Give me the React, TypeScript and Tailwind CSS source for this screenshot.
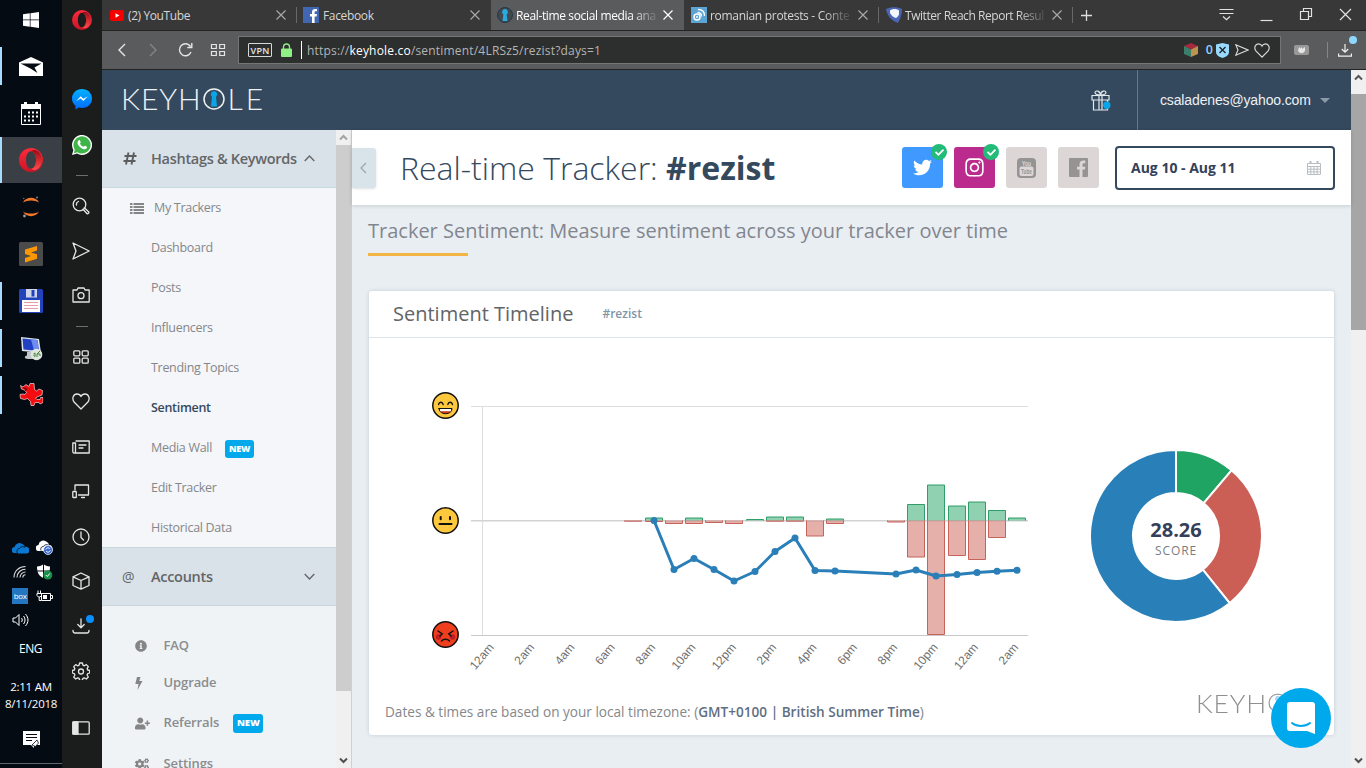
import type { ReactNode } from "react";
import {
  FaTwitter,
  FaInstagram,
  FaInfoCircle,
  FaUserPlus,
  FaCogs,
  FaCheck,
} from "react-icons/fa";

/* ---------- Desktop taskbar ---------- */

function TaskItem({ children, open, active }: { children: ReactNode; open?: boolean; active?: boolean }) {
  return (
    <div className={active ? "flex h-[47px] pb-px" : "flex h-[47px] pt-[4px] pb-[5px]"}>
      <div className={open ? "w-[2px] bg-[#a6dcff]" : "w-[2px]"} />
      <div className={active ? "flex flex-1 items-center justify-center bg-[#3a3e45] pr-[2px]" : "flex flex-1 items-center justify-center pr-[2px]"}>
        {children}
      </div>
    </div>
  );
}

function OperaLogo({ size }: { size: number }) {
  return (
    <svg width={size} height={size} viewBox="0 0 24 24">
      <defs>
        <linearGradient id="op" x1="0" y1="0" x2="0" y2="1">
          <stop offset="0" stopColor="#ff2a3c" />
          <stop offset="1" stopColor="#c91526" />
        </linearGradient>
        <linearGradient id="op2" x1="0" y1="0" x2="0" y2="1">
          <stop offset="0" stopColor="#9d0b16" />
          <stop offset="1" stopColor="#ff4b4b" />
        </linearGradient>
      </defs>
      <path fillRule="evenodd" fill="url(#op)" d="M12 0a12 12 0 1 0 0 24 12 12 0 0 0 0-24Zm0 3.2c3 0 5 4 5 8.800s-2 8.800-5 8.800-5-4-5-8.800 2-8.800 5-8.800Z" />
      <path fill="url(#op2)" d="M12 3.200c2-1.600 5-1.500 7.600.6A12 12 0 0 1 19.600 20.200c-2.600 2.200-5.600 2.200-7.600.6 3 0 5-4 5-8.800s-2-8.800-5-8.800Z" />
    </svg>
  );
}

function Taskbar() {
  return (
    <aside className="flex h-full w-[62px] flex-col bg-[#050b13] text-white">
      <div className="flex h-[43px] items-center justify-center pb-[4px]">
        <svg width="16" height="16" viewBox="0 0 16 16" fill="#fff">
          <path d="M0 2.300 6.800 1.300V7.500H0ZM7.500 1.200 16 0V7.500H7.500ZM0 8.300H6.800V14.700L0 13.700ZM7.500 8.300H16V16L7.500 14.800Z" />
        </svg>
      </div>
      <TaskItem open>
        <svg width="24" height="19" viewBox="0 0 24 19">
          <path d="M0 5.500 12 0l12 5.500V19H0Z" fill="#fff" />
          <path d="M1.500 6.500H22.500L15.500 10.500l3 5.500L11.500 11.500Z" fill="#050b13" />
        </svg>
      </TaskItem>
      <TaskItem>
        <svg width="20" height="23" viewBox="0 0 20 23">
          <path d="M.5 2.500h19v20H.5Z" fill="none" stroke="#fff" />
          <path d="M0 2h3V0h3v2h8V0h3v2h3v5H0Z" fill="#fff" />
          <g fill="#fff">
            {[9.5, 13.5, 17.5].map((y) =>
              [3, 7, 11, 15].map((x) => (y === 9.5 && x === 3) || (y === 17.5 && x === 15) ? null : <rect key={x + "-" + y} x={x} y={y} width="2" height="2" />),
            )}
          </g>
        </svg>
      </TaskItem>
      <TaskItem open active>
        <OperaLogo size={24} />
      </TaskItem>
      <TaskItem>
        <svg width="18" height="22" viewBox="0 0 18 22">
          <path d="M1 6.500C4 .3 14 .3 17 6.500 13 3.800 5 3.800 1 6.500ZM1 15.500c3 6.200 13 6.200 16 0-4 2.700-12 2.700-16 0Z" fill="#f37726" />
          <circle cx="15" cy="1.500" r="1.100" fill="#777" />
          <circle cx="2.500" cy="20" r="1.400" fill="#999" />
          <circle cx="1.800" cy="2.500" r=".7" fill="#777" />
        </svg>
      </TaskItem>
      <TaskItem>
        <svg width="24" height="24" viewBox="0 0 24 24">
          <rect width="24" height="24" rx="1.500" fill="#4b4b4b" />
          <path d="M6 7.600 18 4v4.500L12 10.400 18 12.300v4.500L6 20.500V16l6-1.900-6-2Z" fill="#ff9800" />
        </svg>
      </TaskItem>
      <TaskItem open>
        <svg width="24" height="24" viewBox="0 0 24 24">
          <rect width="24" height="24" rx="1.500" fill="#2343bd" />
          <rect x="7" y="0" width="11" height="8.500" fill="#cdd6ea" />
          <rect x="12.500" y="1" width="3" height="6.500" fill="#2343bd" />
          <rect x="3" y="11" width="18" height="12" fill="#fff" />
          <path d="M5 13.500h14M5 16.500h14M5 19.500h14" stroke="#e99aa4" strokeWidth="1.200" />
        </svg>
      </TaskItem>
      <TaskItem open>
        <svg width="24" height="25" viewBox="0 0 24 25">
          <path d="m2 1 18 2 2 14-19-2Z" fill="#dce3ee" />
          <path d="m3.500 2.500 15 1.500 1.500 11-15.500-1.500Z" fill="#2140c4" />
          <path d="m12 3.500 6.500.5 1.500 11-5-.6Z" fill="#6f8cf0" />
          <path d="M8 16h6v3l4 4H9c-4 0-4-3-1-3.500Z" fill="#c3c6cb" />
          <circle cx="17.500" cy="18.500" r="5.800" fill="#dfe6dc" />
          <path d="m14.500 19.500 1.500 1v-3.500l-1.500 1M18 21v-3l3-3M18.500 18h2.500v2" stroke="#41803c" fill="none" />
        </svg>
      </TaskItem>
      <TaskItem open>
        <svg width="24" height="25" viewBox="0 0 24 25">
          <path d="M1.500 2.500 4 4l3-2.500 3 2 1-3h4l.5 6 2 1.500 2.500-2 3.500 1.500-.5 4.500-4 1.500-2.500 1.500 1.500 1.500h3l.5-2h2.500v5l-3 1.500-1-1.500h-4l-1 3-3 0-.5-4-3-3-3 1-4-1-.5-4 3-.5 2 .5 1.500-2-2-2.500-3-1Z" fill="#f40d10" stroke="#f9d5d5" strokeWidth=".7" />
          <path d="m4 4.500 3 1.500M8 5.500 6 8" stroke="#300" strokeWidth="1" />
        </svg>
      </TaskItem>
      <div className="flex-1" />
      <div className="grid h-[96px] grid-cols-2 items-center pl-[8px] pr-[5px] pb-px [&>*]:mx-auto">
        <svg width="17" height="12" viewBox="0 0 17 12" fill="#0a78d0">
          <path d="M5 11H3a3 3 0 0 1-.5-6A5 5 0 0 1 11 2.500a4 4 0 0 1 2 2.500 3.300 3.300 0 0 1 2 6.500H6A3.500 3.500 0 0 1 5 11Z" />
          <path d="M5.500 11c-1.500-3 .5-4.500 2-4.500C8.500 4.500 11 4 13 5.500" fill="none" stroke="#050b13" strokeWidth=".8" />
        </svg>
        <svg width="17" height="15" viewBox="0 0 17 15">
          <path d="M5 11H3a3 3 0 0 1-.5-6A5 5 0 0 1 11 2a4 4 0 0 1 2 3 3.300 3.300 0 0 1 2 6H6Z" fill="#fff" />
          <path d="M5 10.500C4 8 5.500 6.500 7.500 6.500 8.500 4.500 11 4 13 5.500" fill="none" stroke="#050b13" strokeWidth=".8" />
          <circle cx="12" cy="10" r="4.500" fill="#3c6bd0" stroke="#fff" strokeWidth=".7" />
          <path d="M9.800 9.500a2.300 2.300 0 0 1 4-.8M14.200 10.500a2.300 2.300 0 0 1-4 .8" stroke="#fff" fill="none" />
        </svg>
        <svg width="14" height="13" viewBox="0 0 14 13" fill="none" stroke="#ddd" strokeWidth="1.100">
          <path d="M1 12.500C1 6 6 1.500 12.500 1.500M4 12.500c0-5 4-8.300 8.500-8.300M7 12.500c0-3 2.500-5.500 5.500-5.500M9.800 12.500c0-1.500 1-2.800 2.700-2.800" />
        </svg>
        <svg width="17" height="16" viewBox="0 0 17 16">
          <path d="M1 2.500C4 2.500 6 1.500 7.500 0 9 1.500 11 2.500 14 2.500 14 9 12 12 7.500 14 3 12 1 9 1 2.500Z" fill="#fff" />
          <path d="M7.500 0v14M1 7h13" stroke="#050b13" />
          <circle cx="11.800" cy="11" r="4.500" fill="#179149" />
          <path d="m9.800 11 1.500 1.500 2.500-3" stroke="#fff" fill="none" />
        </svg>
        <div className="flex h-[16px] w-[16px] items-center justify-center bg-[#2277c0] font-['Open_Sans',sans-serif] text-[8px] leading-none tracking-[-0.3px] text-white">box</div>
        <svg width="17" height="13" viewBox="0 0 17 13" fill="none" stroke="#fff">
          <path d="M5.500 3.500h9v7h-9ZM15 5.500h1.500v3H15M2 .5v3M4.500.5v3M1 3.500h4.500v2L4 7H2.500L1 5.500ZM3.200 7v3.500H5" />
          <rect x="7" y="5" width="4" height="4" fill="#fff" stroke="none" />
        </svg>
        <svg width="17" height="14" viewBox="0 0 17 14" fill="none" stroke="#fff">
          <path d="M1 5h2.500L7 1.500v11L3.500 9H1ZM9.500 5c1 1.300 1 2.700 0 4M11.500 3c2 2.500 2 5.500 0 8M13.500 1c3.300 4 3.300 8 0 12" />
        </svg>
      </div>
      <div className="mt-[5px] pr-px text-center font-['Open_Sans',sans-serif] text-[12px] leading-[24px] tracking-[-0.4px]">ENG</div>
      <div className="mt-[17px] text-center font-['Open_Sans',sans-serif] text-[11.5px] leading-[17px] tracking-[-0.25px]">
        <div>2:11 AM</div>
        <div>8/11/2018</div>
      </div>
      <div className="flex h-[51px] items-center justify-center pt-[3px]">
        <svg width="17" height="17" viewBox="0 0 17 17">
          <path d="M0 0h17v14h-6v3l-3-3H0Z" fill="#fff" />
          <path d="M3 3.500h11M3 6.500h11M3 9.500h6" stroke="#050b13" />
          <path d="m9 14 5-5 1.500 3-3 3.500Z" fill="#fff" stroke="#050b13" strokeWidth=".8" />
        </svg>
      </div>
      <div className="mb-[4px] h-px bg-[#60656b]" />
    </aside>
  );
}

/* ---------- Browser side panel ---------- */

function Slot({ className, children }: { className: string; children?: ReactNode }) {
  return <div className={"flex shrink-0 items-center justify-center " + className}>{children}</div>;
}

function Line({ w = 20, h = 20, children }: { w?: number; h?: number; children: ReactNode }) {
  return (
    <svg width={w} height={h} viewBox={`0 0 ${w} ${h}`} fill="none" stroke="#e4e6e6" strokeWidth="1.300" strokeLinejoin="round" strokeLinecap="round" className="mr-[2px]">
      {children}
    </svg>
  );
}

const heart = "M9 16 2.300 9.300C-.7 5.500 1.500 1 5 1c2 0 3.300 1 4 2.500C9.700 2 11 1 13 1c3.500 0 5.700 4.500 2.700 8.300Z";

function SidePanel() {
  return (
    <aside className="flex h-full w-[40px] flex-col bg-[#1b1d1d]">
      <Slot className="h-[40px]">
        <OperaLogo size={20} />
      </Slot>
      <Slot className="mt-[37px] h-[45px]">
        <svg width="20" height="21" viewBox="0 0 20 21">
          <defs>
            <linearGradient id="ms" x1="0" y1="0" x2="0" y2="1">
              <stop offset="0" stopColor="#00b2ff" />
              <stop offset="1" stopColor="#006aff" />
            </linearGradient>
          </defs>
          <path d="M10 0C4.300 0 0 4.200 0 9.500c0 3 1.300 5.500 3.500 7.200V20.500l3.300-2c1 .3 2 .5 3.200.5 5.700 0 10-4.200 10-9.500S15.700 0 10 0Z" fill="url(#ms)" />
          <path d="m4.200 12 4.500-4.700 2.600 2.400 4.500-2.400-4.500 4.700-2.500-2.400Z" fill="#fff" />
        </svg>
      </Slot>
      <Slot className="h-[46px]">
        <svg width="20" height="20" viewBox="0 0 20 20">
          <path d="M0 20 1.400 15A10 10 0 1 1 5 18.600Z" fill="#fff" />
          <path d="M1.800 18.200 2.800 14.600A8.600 8.600 0 1 1 5.400 17.200Z" fill="#3fb449" />
          <path d="M6.500 5.500c.5-.6 1.300-.5 1.500 0l.7 1.700c.1.500-.7 1.200-.7 1.500.8 1.500 2 2.500 3.500 3.100.4 0 1-1.100 1.500-1l1.900.9c.3.200 0 1.300-.4 1.700-1.400 1.300-3.300.8-5-.2-1.800-1.100-3.200-2.700-3.900-4.500-.3-1.200.2-2.500.9-3.200Z" fill="#fff" />
        </svg>
      </Slot>
      <Slot className="h-[15px]"><div className="h-px w-[12px] bg-[#6b6e6e]" /></Slot>
      <Slot className="h-[45px]">
        <Line w={18} h={18}>
          <circle cx="7.500" cy="7.500" r="6.300" />
          <path d="M4.500 8a3 3 0 0 1 2-3.500M12.300 10.800l4.500 4.200c.6.600-1 2.300-1.700 1.700L11 12.200" />
        </Line>
      </Slot>
      <Slot className="h-[45px]">
        <Line w={18} h={18}><path d="M1 1l16.200 8L1 17l3-8Z" /></Line>
      </Slot>
      <Slot className="h-[44px]">
        <Line w={18} h={16}>
          <path d="M1 3h4l1-2h6l1 2h4.200v12H1Z" />
          <circle cx="9" cy="8.700" r="3" />
        </Line>
      </Slot>
      <Slot className="mt-px h-[16px]"><div className="h-px w-[12px] bg-[#6b6e6e]" /></Slot>
      <Slot className="h-[45px]">
        <Line w={16} h={14}>
          <rect x=".8" y=".8" width="6" height="5" rx="1" />
          <rect x="9.200" y=".8" width="6" height="5" rx="1" />
          <rect x=".8" y="8.200" width="6" height="5" rx="1" />
          <rect x="9.200" y="8.200" width="6" height="5" rx="1" />
        </Line>
      </Slot>
      <Slot className="h-[45px]">
        <Line w={18} h={17}><path d={heart} /></Line>
      </Slot>
      <Slot className="h-[45px]">
        <Line w={18} h={14}>
          <path d="M4 1h13.200v12H2.200C1.300 13 .8 12.500.8 11.800V3H3.500v9M7 5h7M7 8h4" />
        </Line>
      </Slot>
      <Slot className="h-[45px]">
        <Line w={18} h={15}>
          <path d="M3 6V1h13.500v10H6.500M9.500 13.500h3" />
          <rect x=".8" y="7.500" width="3.500" height="6" rx=".6" />
        </Line>
      </Slot>
      <Slot className="h-[45px]">
        <Line w={18} h={18}>
          <circle cx="9" cy="9" r="8" />
          <path d="M9 4v5.500l2.500 2.500" />
        </Line>
      </Slot>
      <Slot className="h-[44px]">
        <Line w={18} h={18}><path d="M9 1l8 3.800v8.700L9 17.200 1 13.500V4.800ZM1 4.800l8 3.700 8-3.700M9 8.500v8.700" /></Line>
      </Slot>
      <Slot className="relative h-[45px]">
        <Line w={18} h={16}><path d="M9 1v8.500M5.800 6.500 9 9.700l3.200-3.200M1 12.500c0 2 .5 2.500 2 2.500h12c1.500 0 2-.5 2-2.500" /></Line>
        <div className="absolute top-[12px] left-[24px] h-2 w-2 rounded-full bg-[#0b8fff]" />
      </Slot>
      <Slot className="h-[46px]">
        <Line w={18} h={18}>
          <path d="M7.600 1h2.800l.5 2.200 1.400.6 2-1.200 2 2-1.200 2 .6 1.400 2 .5v2.500l-2 .6-.6 1.400 1.200 2-2 2-2-1.200-1.400.6-.5 2H7.600l-.5-2-1.400-.6-2 1.200-2-2 1.200-2-.6-1.400-2-.6V8.500l2-.5.6-1.400-1.200-2 2-2 2 1.200 1.400-.6Z" />
          <circle cx="9" cy="9.500" r="2.500" />
        </Line>
      </Slot>
      <Slot className="mt-[11px] h-[45px]">
        <Line w={18} h={14}>
          <rect x=".8" y=".8" width="16.400" height="12.400" rx="1" />
          <path d="M1 1h5v12H1Z" fill="#e4e6e6" />
        </Line>
      </Slot>
    </aside>
  );
}

/* ---------- Browser chrome ---------- */

function Close({ bright }: { bright?: boolean }) {
  return (
    <svg width="10" height="10" viewBox="0 0 10 10" stroke={bright ? "#fff" : "#a8a8a8"} strokeWidth="1.200" className="shrink-0">
      <path d="M.5.5l9 9M9.500.5l-9 9" />
    </svg>
  );
}

function Tab({ icon, title, width, active, bar, fade, tracking }: { icon: ReactNode; title: string; width: string; active?: boolean; bar?: boolean; fade?: boolean; tracking: string }) {
  return (
    <div className={`flex h-full shrink-0 items-center ${width} ${active ? "bg-[#5a5b5c] pl-[5px] text-white" : "pl-[6px] text-[#d6d6d6]"}`}>
      <div className="flex w-[17px] shrink-0 items-center justify-center">{icon}</div>
      <div className="ml-[3px] flex-1 whitespace-nowrap pt-px text-[12px]">
        <span className={`${tracking} ${fade ? "[mask-image:linear-gradient(to_right,#000_calc(100%-26px),rgba(0,0,0,0.15))]" : ""}`}>{title}</span>
      </div>
      <div className="mr-[10px] flex items-center"><Close bright={active} /></div>
      <div className={bar ? "h-[16px] w-px bg-[#686868]" : "h-[16px] w-px"} />
    </div>
  );
}

function Chrome() {
  return (
    <header className="shrink-0 font-['Open_Sans',sans-serif]">
      <div className="flex h-[31px] items-center border-b border-[#232323] bg-[#383838]">
        <Tab width="w-[195px]" bar tracking="tracking-[-0.4px]" title="(2) YouTube" icon={
          <svg width="14" height="11" viewBox="0 0 14 11" className="ml-px"><rect width="14" height="11" rx="2" fill="#f50000" /><path d="m5.500 3.200 4 2.300-4 2.300Z" fill="#fff" /></svg>
        } />
        <Tab width="w-[194px]" tracking="tracking-[-0.35px]" title="Facebook" icon={
          <svg width="16" height="16" viewBox="0 0 16 16" className="mr-px"><rect width="16" height="16" fill="#4267b2" /><path d="M9 16V9.500H7V7h2V5.200C9 3 10.200 2 12.200 2H14v2.300h-1.200c-.9 0-1.200.4-1.200 1.200V7H14l-.4 2.500h-2V16Z" fill="#fff" /></svg>
        } />
        <Tab width="w-[193px]" active fade tracking="tracking-[-0.36px]" title="Real-time social media ana" icon={
          <svg width="16" height="16" viewBox="0 0 16 16"><circle cx="8" cy="8" r="7.500" fill="#41484e" stroke="#26384a" /><path d="M8 2a3 3 0 0 0-1.600 5.500L5.500 14h5L9.600 7.500A3 3 0 0 0 8 2Z" fill="#29abe2" /></svg>
        } />
        <Tab width="w-[195px]" bar fade tracking="tracking-[-0.3px]" title="romanian protests - Conte" icon={
          <svg width="16" height="16" viewBox="0 0 16 16" fill="none" stroke="#fff"><rect width="16" height="16" fill="#5ba4d3" stroke="none" /><circle cx="6" cy="10" r="3" strokeWidth="1.500" /><circle cx="6" cy="10" r=".7" /><path d="M6.500 5.500c2.500 0 4 1.500 4 4M7 2.500c4 0 6.500 2.500 6.500 6.500" strokeWidth="1.300" /></svg>
        } />
        <Tab width="w-[194px]" bar fade tracking="tracking-[-0.45px]" title="Twitter Reach Report Resul" icon={
          <svg width="16" height="16" viewBox="0 0 16 16"><path d="M0 2C5-.5 11-.5 16 2c0 7-3 12-4 14C6 14 1 9 0 2Z" fill="#4a66b5" /><path d="M4 3.500c2-2 7-2 9 0v4c-1 2-2 3-3 3.500-3-.5-5-3-6-5Z" fill="#f4f6fb" /></svg>
        } />
        <div className="flex flex-1 items-center">
          <svg width="11" height="11" viewBox="0 0 11 11" stroke="#ddd" strokeWidth="1.300" className="ml-[8px]"><path d="M5.500 0v11M0 5.500h11" /></svg>
          <div className="flex-1" />
          <svg width="146" height="16" viewBox="0 0 146 16" fill="none" stroke="#e2e2e2" strokeWidth="1.200" className="mr-[11px]">
            <path d="M10.500 2.500h14M10.500 6.500h14M14 9.500l3.500 3.300L21 9.500" />
            <path d="M51.500 13.500h12" />
            <path d="M94.500 1.500h8v8h-8Z" />
            <path d="M91.500 4.500h8v8h-8Z" fill="#383838" />
            <path d="m131 2 11 11M142 2 131 13" />
          </svg>
        </div>
      </div>
      <div className="flex h-[39px] items-center border-b border-[#232323] bg-[#5a5b5c]">
        <svg width="130" height="20" viewBox="0 0 130 20" fill="none" stroke="#e6e6e6" strokeWidth="1.400" className="shrink-0">
          <path d="m23 4-6 6 6 6" />
          <path d="m48 4 6 6-6 6" stroke="#858686" />
          <path d="M88.500 6.500A6 6 0 1 0 89 12M89.800 3v4.500h-4.500" />
          <path d="M109.500 4.500h4.800v4h-4.800ZM117.700 4.500h4.800v4h-4.800ZM109.500 11.500h4.800v4h-4.800ZM117.700 11.500h4.800v4h-4.800Z" strokeWidth="1.200" />
        </svg>
        <div className="ml-[6px] flex h-[28px] w-[1043px] shrink-0 items-center border border-[#747676] bg-[#2d2e2e]">
          <div className="ml-[9px] flex h-[14px] w-[24px] items-center justify-center rounded-[1px] border border-[#d8d8d8] text-[9px] font-semibold leading-none tracking-[0.2px] text-[#e6e6e6]">VPN</div>
          <svg width="11" height="14" viewBox="0 0 11 14" className="ml-[9px]"><rect y="5.500" width="11" height="8.500" rx="1" fill="#8ff084" /><path d="M2.500 6V4a3 3 0 0 1 6 0v2" stroke="#8ff084" strokeWidth="1.300" fill="none" /></svg>
          <div className="ml-[9px] h-[18px] w-px bg-white" />
          <div className="ml-[5px] whitespace-nowrap pt-[2px] text-[12px] tracking-[0.19px] text-[#b4b5b5]">https://<span className="text-white">keyhole.co</span>/sentiment/4LRSz5/rezist?days=1</div>
          <div className="flex-1" />
          <svg width="14" height="14" viewBox="0 0 14 14" className="mr-px"><path d="m7 0 7 3-7 3.500L0 3Z" fill="#a8283c" /><path d="m0 3 7 3.500V14l-7-3Z" fill="#3b7f6b" /><path d="m14 3-7 3.500V14l7-3Z" fill="#bd9350" /></svg>
          <div className="ml-[7px] pt-px text-[12.5px] font-semibold text-[#8fd3ff]">0</div>
          <svg width="13" height="15" viewBox="0 0 13 15" className="ml-[3px]"><path d="M0 1.500 6.500 0 13 1.500V9c0 3-3 5-6.500 6C3 14 0 12 0 9Z" fill="#98d9ff" /><path d="m3.500 4 6 6M9.500 4l-6 6" stroke="#222" strokeWidth="1.300" /></svg>
          <svg width="14" height="12" viewBox="0 0 14 12" fill="none" stroke="#ddd" strokeWidth="1.100" className="ml-[6px]"><path d="M.8.8 13 6 .8 11.200 3 6Z" /></svg>
          <svg width="16" height="15" viewBox="0 0 18 17" fill="none" stroke="#ddd" strokeWidth="1.300" className="ml-[5px] mr-[10px]"><path d={heart} /></svg>
        </div>
        <div className="ml-[13px] mr-px flex h-[10px] w-[15px] shrink-0 items-center justify-center rounded-[2px] bg-[#999]">
          <svg width="8" height="8" viewBox="0 0 8 8" fill="#e6e6e6"><path d="M1 1l1.500 1.500L4 1v2l3-2v4L5 7H2L0 5Z" /></svg>
        </div>
        <div className="ml-[17px] h-[16px] w-px bg-[#858686]" />
        <div className="relative ml-[10px] flex h-[24px] w-[20px] shrink-0 items-center">
          <svg width="14" height="13" viewBox="0 0 14 13" fill="none" stroke="#f0f0f0" strokeWidth="1.200"><path d="M7 0v8M3.800 5 7 8.200 10.200 5M.6 9.500v2.700h12.800V9.500" /></svg>
          <div className="absolute -top-[2px] left-[11px] h-2 w-2 rounded-full bg-[#8ed8ff]" />
        </div>
      </div>
    </header>
  );
}

/* ---------- Page ---------- */

function Wordmark({ text, ring, fill }: { text: string; ring: string; fill: string }) {
  return (
    <div className={`flex items-center font-['Lato',sans-serif] text-[30px] font-light leading-[30px] ${text}`}>
      <span className="tracking-[0.9px]">KEYH</span>
      <svg width="22" height="22" viewBox="0 0 22 22" className="mt-[1px] mr-[3px] ml-px shrink-0">
        <circle cx="11" cy="11" r="10" fill="none" stroke={ring} strokeWidth="1.500" />
        <path d="M11 3a3.400 3.400 0 0 0-2 6L8 18.500h6L13 9a3.400 3.400 0 0 0-2-6Z" fill={fill} />
      </svg>
      <span className="tracking-[3px]">LE</span>
    </div>
  );
}

function NewBadge({ className }: { className: string }) {
  return <span className={`flex items-center justify-center rounded-[3px] bg-[#00a9ec] font-extrabold leading-none text-white ${className}`}>NEW</span>;
}

function NavRow({ label, active, badge }: { label: string; active?: boolean; badge?: boolean }) {
  return (
    <li className={`flex h-[40px] shrink-0 items-center pl-[49px] pt-px ${active ? "text-[12.5px] font-semibold tracking-[-0.3px] text-[#34495e]" : "text-[12.5px] tracking-[-0.3px] text-[#858789]"}`}>
      {label}
      {badge && <NewBadge className="ml-[13px] h-[18px] w-[29px] text-[9px]" />}
    </li>
  );
}

function FootRow({ icon, label, badge, height }: { icon: ReactNode; label: string; badge?: boolean; height: string }) {
  return (
    <li className={`flex shrink-0 items-center pl-[33px] text-[13px] font-semibold tracking-[-0.1px] text-[#8a8c8e] ${height}`}>
      <span className="w-[28.5px] text-[#858585]">{icon}</span>
      {label}
      {badge && <NewBadge className="ml-[14px] h-[19px] w-[30px] text-[9.5px]" />}
    </li>
  );
}

function Sidebar() {
  return (
    <nav className="flex w-[250px] shrink-0 border-r border-[#c9d2da] bg-[#eff3f6]">
      <div className="flex w-[234px] flex-col">
        <div className="flex h-[58px] shrink-0 items-center border-b border-[#c9d9e2] bg-[#d9e2e9] text-[14.5px] font-semibold tracking-[-0.3px] text-[#636567]">
          <svg width="14" height="13" viewBox="0 0 14 13" fill="none" stroke="#5b5d5f" strokeWidth="1.900" className="ml-[21px]"><path d="M5.500.5 3 12.500M11 .5 8.500 12.500M1.500 4h12M.5 9h12" /></svg>
          <span className="ml-[14px] whitespace-nowrap">Hashtags &amp; Keywords</span>
          <svg width="11" height="7" viewBox="0 0 11 7" fill="none" stroke="#636567" strokeWidth="1.300" className="ml-[7px]"><path d="m.7 6 4.800-5 4.800 5" /></svg>
        </div>
        <ul className="flex h-[359px] shrink-0 flex-col bg-[#f4f6fa]">
          <li className="flex h-[40px] shrink-0 items-center pl-[28px] text-[12.5px] tracking-[-0.3px] text-[#858789]">
            <svg width="14" height="11" viewBox="0 0 14 11" stroke="#858585" strokeWidth="2" className="mr-[10px]"><path d="M0 1h2.500M3.500 1H14M0 4h2.500M3.500 4H14M0 7h2.500M3.500 7H14M0 10h2.500M3.500 10H14" /></svg>
            My Trackers
          </li>
          <NavRow label="Dashboard" />
          <NavRow label="Posts" />
          <NavRow label="Influencers" />
          <NavRow label="Trending Topics" />
          <NavRow label="Sentiment" active />
          <NavRow label="Media Wall" badge />
          <NavRow label="Edit Tracker" />
          <NavRow label="Historical Data" />
        </ul>
        <div className="flex h-[59px] shrink-0 items-center border-y border-[#c9d6de] bg-[#d9e2e9] text-[14.5px] font-semibold tracking-[-0.3px] text-[#636567]">
          <span className="ml-[20px] w-[29px] text-[14px] font-normal">@</span>
          <span className="flex-1">Accounts</span>
          <svg width="11" height="7" viewBox="0 0 11 7" fill="none" stroke="#636567" strokeWidth="1.300" className="mr-[21px]"><path d="m.7 1 4.800 5 4.800-5" /></svg>
        </div>
        <ul className="flex flex-col pt-[20px]">
          <FootRow height="h-[40px]" icon={<FaInfoCircle size={12} />} label="FAQ" />
          <FootRow height="h-[34px]" icon={<svg width="8" height="13" viewBox="0 0 8 13" fill="#858585"><path d="M2 0h3.500L4.300 4H7.500L2.500 13l1-6H.3Z" /></svg>} label="Upgrade" />
          <FootRow height="h-[46px]" icon={<FaUserPlus size={15} />} label="Referrals" badge />
          <FootRow height="h-[36px]" icon={<FaCogs size={14} />} label="Settings" />
        </ul>
      </div>
      <div className="flex w-[15px] flex-col items-center bg-[#f0f0f0]">
        <svg width="9" height="15" viewBox="0 0 9 15" fill="none" stroke="#a3a3a3" strokeWidth="2"><path d="M1 9.500 4.500 6 8 9.500" /></svg>
        <div className="h-[546px] w-full bg-[#cdcdcd]" />
        <div className="flex-1" />
        <svg width="9" height="15" viewBox="0 0 9 15" fill="none" stroke="#505050" strokeWidth="2"><path d="M1 5.500 4.500 9 8 5.500" /></svg>
      </div>
    </nav>
  );
}

function Tick() {
  return (
    <span className="absolute -top-[3px] -right-[4px] flex h-[16px] w-[16px] items-center justify-center rounded-full bg-[#22bb77] text-white">
      <FaCheck size={9} />
    </span>
  );
}

const bars: { x: number; up: number; down: number }[] = [
  { x: 624.5, up: 0, down: 0.7 },
  { x: 645.5, up: 2.5, down: 1 },
  { x: 665.5, up: 0, down: 3 },
  { x: 685.5, up: 2.5, down: 3 },
  { x: 705.5, up: 0, down: 2 },
  { x: 725.5, up: 0, down: 3 },
  { x: 746.5, up: 1, down: 0 },
  { x: 766.5, up: 3.5, down: 0.7 },
  { x: 786.5, up: 3.5, down: 0.7 },
  { x: 806.5, up: 0, down: 15.5 },
  { x: 826.5, up: 1.5, down: 3 },
  { x: 887.5, up: 0, down: 1.5 },
  { x: 907.5, up: 16, down: 36.5 },
  { x: 927.5, up: 35.5, down: 114 },
  { x: 948.5, up: 14.5, down: 35 },
  { x: 968.5, up: 18.5, down: 39 },
  { x: 988.5, up: 10, down: 17 },
  { x: 1008.5, up: 2.5, down: 0 },
];

const points: [number, number][] = [
  [654, 520.5], [674, 569.5], [694, 558.5], [714, 569.5], [734, 581], [755, 571.5], [775, 551.5], [795, 538],
  [815, 570.5], [835, 571], [896, 574], [916, 570], [936, 576], [957, 574.5], [977, 572.5], [997, 571.2], [1017, 570.3],
];

const hours = ["12am", "2am", "4am", "6am", "8am", "10am", "12pm", "2pm", "4pm", "6pm", "8pm", "10pm", "12am", "2am"];

function Timeline() {
  return (
    <svg width="610" height="290" viewBox="425 385 610 290" className="shrink-0">
      <g stroke="#dedede" fill="none">
        <path d="M471 406.500H1028" />
        <path d="M482.500 406V636" />
        <path d="M471 520.700H1028" stroke="#d2d2d2" strokeWidth="1.600" />
        <path d="M471 635.500H1028" stroke="#c8c8c8" />
      </g>
      {bars.map((b) => (
        <g key={b.x} strokeWidth="1">
          {b.up > 0 && <path d={`M${b.x} 520.500v${-b.up}h17v${b.up}`} fill="#1fa463" fillOpacity=".5" stroke="#2f9e68" />}
          {b.down > 0 && <path d={`M${b.x} 520.500v${b.down}h17v${-b.down}`} fill="#cb5f56" fillOpacity=".5" stroke="#c7635b" />}
        </g>
      ))}
      <polyline points={points.map((p) => p.join(",")).join(" ")} fill="none" stroke="#2a7fb8" strokeWidth="3" strokeLinejoin="round" />
      {points.map(([x, y]) => <circle key={x} cx={x} cy={y} r="3.500" fill="#2a7fb8" />)}
      <g fontFamily="Liberation Sans, Arial, sans-serif" fontSize="12" fill="#6f6f6f" textAnchor="end">
        {hours.map((h, i) => {
          const x = 494.5 + i * 40.35;
          return <text key={i} x={x} y={647.5} transform={`rotate(-50 ${x} 647.5)`}>{h}</text>;
        })}
      </g>
      <g stroke="#111" strokeWidth="1.500" fill="none" strokeLinecap="round">
        <circle cx="445.500" cy="405.500" r="12.700" fill="#fdc73e" />
        <path d="M438.500 404.500c.7-3 4-3 4.700 0M447.800 404.500c.7-3 4-3 4.700 0" strokeWidth="1.300" />
        <path d="M439 408.500h13c0 7-13 7-13 0Z" fill="#d33a1c" strokeWidth="1" />
        <path d="M440 409h11v2.200h-11Z" fill="#fff" stroke="none" />
        <circle cx="445.500" cy="520.500" r="12.700" fill="#fdc73e" />
        <path d="M440.700 517v2.300M450 517v2.300" strokeWidth="2" />
        <path d="M439.500 524h12" strokeWidth="2" />
        <circle cx="445.500" cy="634.500" r="12.700" fill="#ef3e1d" />
        <g fill="#c31d24" stroke="none"><circle cx="438.500" cy="637" r="2.800" /><circle cx="452.500" cy="637" r="2.800" /></g>
        <path d="m438 631 4.200 2.800-2.200 2.200M453 631l-4.200 2.800 2.200 2.200M441.500 641c2-2.200 6-2.200 8 0" />
      </g>
    </svg>
  );
}

function arc(a0: number, a1: number) {
  const p = (r: number, a: number) => {
    const t = (a * Math.PI) / 180;
    return `${86 + r * Math.sin(t)} ${86 - r * Math.cos(t)}`;
  };
  const large = a1 - a0 > 180 ? 1 : 0;
  return `M${p(86, a0)}A86 86 0 ${large} 1 ${p(86, a1)}L${p(43, a1)}A43 43 0 ${large} 0 ${p(43, a0)}Z`;
}

function ScoreDonut() {
  return (
    <div className="relative h-[172px] w-[172px] shrink-0">
      <svg width="172" height="172" viewBox="0 0 172 172" stroke="#fff" strokeWidth="2">
        <path d={arc(0, 40.2)} fill="#1fa463" />
        <path d={arc(40.2, 141.4)} fill="#cb5f56" />
        <path d={arc(141.4, 360)} fill="#2980b9" />
      </svg>
      <div className="absolute inset-0 flex flex-col items-center justify-center text-center">
        <div className="mt-[7px] text-[20px] font-bold leading-[22px] text-[#34405a]">28.26</div>
        <div className="text-[12px] leading-[19px] tracking-[0.9px] text-[#7a7c7f]">SCORE</div>
      </div>
    </div>
  );
}

function Main() {
  return (
    <main className="relative flex min-w-0 flex-1 flex-col bg-[#e9eef2]">
      <div className="relative flex h-[75px] shrink-0 items-center bg-white shadow-[0_1px_4px_rgba(0,0,0,0.15)]">
        <div className="flex h-[40px] w-[24px] items-center justify-center rounded-r-[3px] bg-[#d9e3ea] pr-[2px] shadow-sm">
          <svg width="7" height="12" viewBox="0 0 7 12" fill="none" stroke="#a0a6ab" strokeWidth="1.300"><path d="M6 1 1 6l5 5" /></svg>
        </div>
        <h1 className="ml-[24px] flex-1 whitespace-nowrap text-[32px] font-light text-[#34495e]">
          Real-time Tracker: <b className="font-bold">#rezist</b>
        </h1>
        <div className="flex gap-[11px] [&>div]:relative [&>div]:flex [&>div]:h-[41px] [&>div]:w-[41px] [&>div]:items-center [&>div]:justify-center [&>div]:rounded-[3px]">
          <div className="bg-[#4099ff] text-white"><FaTwitter size={19} /><Tick /></div>
          <div className="bg-[#bb2a8d] text-white"><FaInstagram size={21} /><Tick /></div>
          <div className="bg-[#dcd6d6]">
            <svg width="19" height="20" viewBox="0 0 19 20" fontFamily="Liberation Sans, sans-serif" fontWeight="700">
              <rect width="19" height="20" rx="4" fill="#969393" />
              <rect x="2.500" y="8.500" width="14" height="9.500" rx="2" fill="#dcd6d6" />
              <text x="9.500" y="7.500" fontSize="7" textLength="9" lengthAdjust="spacingAndGlyphs" textAnchor="middle" fill="#dcd6d6">You</text>
              <text x="9.500" y="16" fontSize="7" textLength="11" lengthAdjust="spacingAndGlyphs" textAnchor="middle" fill="#969393">Tube</text>
            </svg>
          </div>
          <div className="bg-[#dcd6d6]">
            <svg width="19" height="19" viewBox="0 0 19 19"><rect width="19" height="19" rx="1" fill="#969393" /><path d="M10.500 19v-7.500H8V8.700h2.500V6.500c0-2.600 1.500-3.900 3.800-3.900h2V5.300H15c-1.200 0-1.500.6-1.500 1.500v1.900h2.800l-.4 2.800h-2.400V19Z" fill="#dcd6d6" /></svg>
          </div>
        </div>
        <div className="ml-[16px] mr-[16px] flex h-[44px] w-[220px] items-center justify-between rounded-[4px] border-2 border-[#34495e] pl-[14px] pr-[12px] text-[14px] font-bold text-[#34405a]">
          <span>Aug 10 - Aug 11</span>
          <svg width="14" height="14" viewBox="0 0 14 14" fill="none" stroke="#b9bec2"><path d="M.5 2.500h13v11H.5ZM.5 5.500h13M.5 8.200h13M.5 10.900h13M3.800 5.500v8M7 5.500v8M10.200 5.500v8" /><path d="M3.500 0v3M10.500 0v3" strokeWidth="2" /></svg>
        </div>
      </div>
      <h2 className="ml-[16px] mt-[11px] whitespace-nowrap text-[20px] leading-[30px] text-[#83868f]">
        Tracker Sentiment: Measure sentiment across your tracker over time
      </h2>
      <div className="ml-[16px] mt-[7px] h-[3px] w-[100px] shrink-0 bg-[#f3b544]" />
      <section className="ml-[17px] mt-[35px] flex h-[444px] w-[965px] shrink-0 flex-col rounded-[3px] bg-white shadow-[0_0_4px_rgba(40,70,90,0.18)]">
        <div className="flex h-[47px] shrink-0 items-center border-b border-[#dce5ea] pl-[24px]">
          <h3 className="whitespace-nowrap text-[20px] text-[#626466]">Sentiment Timeline</h3>
          <span className="ml-[29px] text-[12px] font-semibold text-[#7f95a8]">#rezist</span>
        </div>
        <div className="flex h-[337px] shrink-0 items-start pl-[56px] pt-[47px]">
          <Timeline />
          <div className="ml-[55px] mt-[65px]"><ScoreDonut /></div>
        </div>
        <div className="flex h-[60px] items-start justify-between pl-[16px]">
          <p className="mt-[27px] whitespace-nowrap text-[13.6px] text-[#85878a]">
            Dates &amp; times are based on your local timezone: (<span className="font-semibold text-[#5f6f82]">GMT+0100 | British Summer Time</span>)
          </p>
          <div className="mt-[12px] w-[138px] origin-left scale-[0.88]"><Wordmark text="text-[#8d8f91]" ring="#9a9c9e" fill="#a8d8ee" /></div>
        </div>
      </section>
      <button className="absolute right-[20px] bottom-[20px] flex h-[60px] w-[60px] items-center justify-center rounded-full bg-[#00a9ec]">
        <svg width="28" height="32" viewBox="0 0 28 32"><path d="M3 0h22a3 3 0 0 1 3 3v29c-3-1-5-2-8-3H3a3 3 0 0 1-3-3V3a3 3 0 0 1 3-3Z" fill="#fff" /><path d="M5 21c5 4 13 4 18 0" stroke="#00a9ec" strokeWidth="2" fill="none" strokeLinecap="round" /></svg>
      </button>
    </main>
  );
}

export default function App() {
  return (
    <div className="flex h-[768px] w-[1366px] overflow-hidden">
      <Taskbar />
      <SidePanel />
      <div className="flex min-w-0 flex-1 flex-col">
        <Chrome />
        <div className="flex min-h-0 flex-1">
          <div className="flex min-w-0 flex-1 flex-col font-['Open_Sans',sans-serif]">
            <div className="flex h-[60px] shrink-0 items-center bg-[#34495e] pl-[19px]">
              <div className="mb-[4px]"><Wordmark text="text-[#eef2f5]" ring="#eef2f5" fill="#0aa5e8" /></div>
              <div className="flex-1" />
              <svg width="20" height="21" viewBox="0 0 20 21" fill="none" stroke="#e3e8ec" strokeWidth="1.200" className="mr-[26px]">
                <path d="M1 5.500h17v4.500H1ZM2.500 10v10h14V10M8 5.500V20M11 5.500V20M9.500 5C7 5 4 4.500 4 2.500 4.500 0 9 .5 9.500 5c.5-4.500 5-5 5.500-2.500 0 2-3 2.500-5.500 2.500Z" />
                <circle cx="15.800" cy="15.300" r="3.700" fill="#0aa5e8" stroke="none" />
              </svg>
              <div className="flex h-full w-[214px] items-center border-l border-[#667687] pl-[22px] font-['Liberation_Sans',sans-serif] text-[14px] tracking-[-0.14px] text-[#edf0f3]">
                csaladenes@yahoo.com
                <svg width="10" height="5" viewBox="0 0 10 5" fill="#8b9aa9" className="ml-[9px]"><path d="M0 0h10L5 5Z" /></svg>
              </div>
            </div>
            <div className="flex min-h-0 flex-1">
              <Sidebar />
              <Main />
            </div>
          </div>
          <div className="flex w-[15px] shrink-0 flex-col items-center bg-[#f0f0f0]">
            <svg width="9" height="24" viewBox="0 0 9 24" fill="none" stroke="#555" strokeWidth="2"><path d="M1 9.500 4.500 6 8 9.500" /></svg>
            <div className="h-[236px] w-full bg-[#a6a6a6]" />
            <div className="flex-1" />
            <svg width="9" height="15" viewBox="0 0 9 15" fill="none" stroke="#505050" strokeWidth="2"><path d="M1 5.500 4.500 9 8 5.500" /></svg>
          </div>
        </div>
      </div>
    </div>
  );
}
